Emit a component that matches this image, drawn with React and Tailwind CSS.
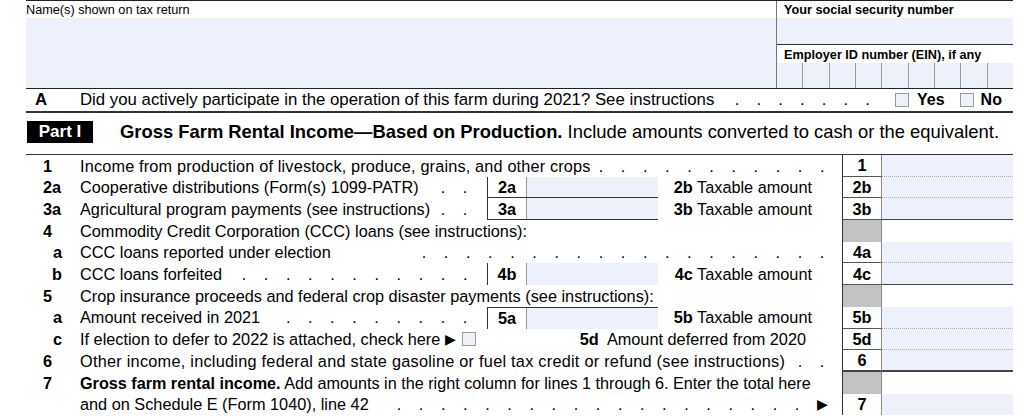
import React from 'react'

const FIELD = 'bg-[#edf1fb]'

// leader dots, pushed against the right edge of the space that is left
function Dots({ count, pitch = 'tracking-[17.6px]' }) {
  return (
    <span className="flex-1 min-w-0 ml-[8px] flex justify-end overflow-hidden">
      <span className={`shrink-0 whitespace-nowrap ${pitch}`}>{'.'.repeat(count)}</span>
    </span>
  )
}

function Checkbox({ className = '' }) {
  return <span className={`inline-block w-[14px] h-[14px] border border-[#9a9a9a] ${FIELD} ${className}`} />
}

function SubBox({ label, bottom = true, top = false }) {
  return (
    <div
      className={`w-[171px] shrink-0 flex h-full ${bottom ? 'border-b border-[#333]' : ''} ${
        top ? 'border-t border-[#333]' : ''
      }`}
    >
      <div className="w-[40px] shrink-0 border-l border-[#333] border-r border-r-[#999] flex items-center justify-center font-bold">
        {label}
      </div>
      <div className={`flex-1 ${FIELD}`} />
    </div>
  )
}

function RightCol({ label, gray = false, field = true, bottom = 'dotted' }) {
  const fieldBorder =
    bottom === 'thick'
      ? 'border-b-2 border-[#444]'
      : bottom === 'solid'
        ? 'border-b border-[#444]'
        : bottom === 'dotted'
          ? 'border-b border-dotted border-[#a8a8a8]'
          : ''
  const labelBorder =
    bottom === 'thick' ? 'border-b-2 border-b-[#444]' : bottom === 'none' ? '' : 'border-b border-b-[#555]'
  return (
    <div className="flex h-full shrink-0">
      <div
        className={`w-[40px] border-l border-[#333] border-r border-r-[#8a8a8a] flex items-center justify-center font-bold ${
          gray ? 'bg-[#c3c3c3]' : ''
        } ${labelBorder}`}
      >
        {label}
      </div>
      <div className={`w-[131px] ${field ? FIELD : ''} ${fieldBorder}`} />
    </div>
  )
}

function Row({ num, sub, children, right }) {
  return (
    <div className="flex h-[21.7px] items-stretch">
      <div
        className={`w-[54px] shrink-0 flex items-center font-bold ${sub ? 'justify-end pr-[18px]' : 'pl-[17px]'}`}
      >
        {num}
      </div>
      <div className="flex-1 min-w-0 flex items-center overflow-hidden">{children}</div>
      {right}
    </div>
  )
}

function Desc({ children, dots = 0 }) {
  return (
    <div className="w-[407px] shrink-0 min-w-0 flex items-center h-full pr-[2px] overflow-hidden">
      <span className="whitespace-nowrap">{children}</span>
      {dots > 0 && <Dots count={dots} />}
    </div>
  )
}

function Taxable({ code, text = 'Taxable amount' }) {
  return (
    <div className="flex-1 text-right pr-[30px] whitespace-nowrap">
      <span className="font-bold">{code}</span> {text}
    </div>
  )
}

export default function App() {
  return (
    <div className="w-[1024px] h-[416px] overflow-hidden bg-white text-black font-['Liberation_Sans',Arial,sans-serif]">
      <div className="ml-[26px] w-[987px]">
        {/* header */}
        <div className="flex border-t border-[#222]">
          <div className="flex-1">
            <div className="h-[17px] text-[12.7px] leading-[18px]">Name(s) shown on tax return</div>
            <div className={`h-[70px] ${FIELD}`} />
          </div>
          <div className="w-[237px] border-l border-[#777]">
            <div className="h-[17px] text-[12.7px] leading-[18px] font-bold pl-[7px]">Your social security number</div>
            <div className={`h-[27px] ${FIELD} border-b border-[#333]`} />
            <div className="h-[18px] text-[12.7px] leading-[20px] font-bold pl-[7px]">
              Employer ID number (EIN), if any
            </div>
            <div className={`h-[25px] flex ${FIELD}`}>
              {[0, 1, 2, 3, 4, 5, 6, 7, 8].map((i) => (
                <div key={i} className={`flex-1 ${i > 0 ? 'border-l border-[#9a9a9a]' : ''}`} />
              ))}
            </div>
          </div>
        </div>

        {/* question A */}
        <div className="flex items-center h-[25px] border-t border-[#222] border-b-2 border-b-[#333] text-[16.8px]">
          <div className="w-[54px] shrink-0 pl-[9px] font-bold">A</div>
          <span className="whitespace-nowrap">
            Did you actively participate in the operation of this farm during 2021? See instructions
          </span>
          <Dots count={7} pitch="tracking-[17.1px]" />
          <span className="w-[126px] shrink-0 pl-[8px] flex items-center">
            <Checkbox />
            <span className="ml-[8px] font-bold text-[16px]">Yes</span>
            <Checkbox className="ml-[15px]" />
            <span className="ml-[7px] font-bold text-[16px]">No</span>
          </span>
        </div>

        {/* part header */}
        <div className="flex items-center h-[22px] mt-[8px] mb-[11px]">
          <div className="w-[66px] h-[22px] bg-black text-white font-bold text-[17px] flex items-center justify-center ml-[1px]">
            Part I
          </div>
          <div className="ml-[27px] whitespace-nowrap text-[18.4px]">
            <span className="font-bold">Gross Farm Rental Income—Based on Production.</span>{' '}
            Include amounts converted to cash or the equivalent.
          </div>
        </div>

        {/* lines */}
        <div className="border-t border-[#333] text-[16.3px]">
          <Row num="1" right={<RightCol label="1" />}>
            <span className="whitespace-nowrap tracking-[0.16px]">
              Income from production of livestock, produce, grains, and other crops
            </span>
            <Dots count={11} />
          </Row>
          <Row num="2a" right={<RightCol label="2b" />}>
            <Desc dots={2}>Cooperative distributions (Form(s) 1099-PATR)</Desc>
            <SubBox label="2a" />
            <Taxable code="2b" />
          </Row>
          <Row num="3a" right={<RightCol label="3b" bottom="solid" />}>
            <Desc dots={2}>Agricultural program payments (see instructions)</Desc>
            <SubBox label="3a" />
            <Taxable code="3b" />
          </Row>
          <Row num="4" right={<RightCol label="" gray field={false} bottom="none" />}>
            <span className="whitespace-nowrap">Commodity Credit Corporation (CCC) loans (see instructions):</span>
          </Row>
          <Row num="a" sub right={<RightCol label="4a" />}>
            <span className="whitespace-nowrap">CCC loans reported under election</span>
            <Dots count={19} />
          </Row>
          <Row num="b" sub right={<RightCol label="4c" bottom="solid" />}>
            <Desc dots={11}>CCC loans forfeited</Desc>
            <SubBox label="4b" bottom={false} />
            <Taxable code="4c" />
          </Row>
          <Row num="5" right={<RightCol label="" gray field={false} bottom="none" />}>
            <span className="whitespace-nowrap">
              Crop insurance proceeds and federal crop disaster payments (see instructions):
            </span>
          </Row>
          <Row num="a" sub right={<RightCol label="5b" />}>
            <Desc dots={9}>Amount received in 2021</Desc>
            <SubBox label="5a" bottom={false} top />
            <Taxable code="5b" />
          </Row>
          <Row num="c" sub right={<RightCol label="5d" />}>
            <div className="w-[407px] shrink-0 flex items-center whitespace-nowrap">
              If election to defer to 2022 is attached, check here
              <span className="ml-[5px] text-[14px]">▶</span>
              <Checkbox className="ml-[6px]" />
            </div>
            <div className="flex-1 text-right pr-[36px] whitespace-nowrap">
              <span className="font-bold">5d</span>&nbsp; Amount deferred from 2020
            </div>
          </Row>
          <Row num="6" right={<RightCol label="6" bottom="thick" />}>
            <span className="whitespace-nowrap tracking-[0.25px]">
              Other income, including federal and state gasoline or fuel tax credit or refund (see instructions)
            </span>
            <Dots count={2} />
          </Row>
          <Row num="7" right={<RightCol label="" gray field={false} bottom="none" />}>
            <span className="whitespace-nowrap text-[16.2px]">
              <span className="font-bold">Gross farm rental income.</span> Add amounts in the right column for lines 1
              through 6. Enter the total here
            </span>
          </Row>
          <Row num="" right={<RightCol label="7" bottom="none" />}>
            <span className="whitespace-nowrap">and on Schedule E (Form 1040), line 42</span>
            <Dots count={19} />
            <span className="shrink-0 text-[14px] pr-[14px]">▶</span>
          </Row>
        </div>
      </div>
    </div>
  )
}
